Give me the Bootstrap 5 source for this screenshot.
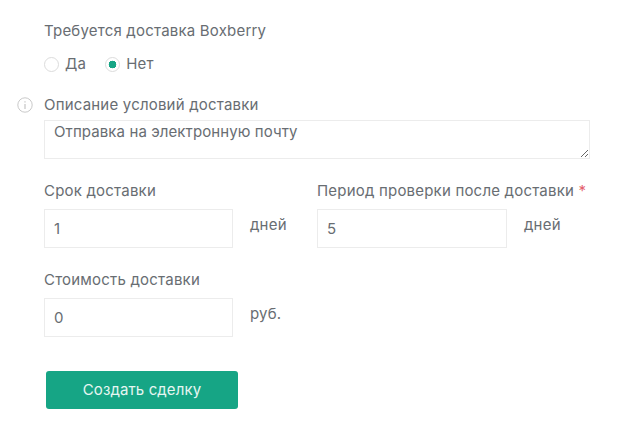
<!DOCTYPE html>
<html lang="ru">
<head>
<meta charset="utf-8">
<title>Доставка</title>
<link rel="stylesheet" href="https://cdn.jsdelivr.net/npm/bootstrap@5.3.0/dist/css/bootstrap.min.css">
<style>
body { background:#fff; font-family:Inter,"Noto Sans",sans-serif; font-size:15px; letter-spacing:.2px; color:#686d72; }
.sheet { padding:21px 38px 0 44px; position:relative; }
.cap { line-height:20px; margin:0; color:#686d72; }
.radios { margin-top:13px; height:20px; gap:19px; }
.radio-item { gap:6px; line-height:20px; }
.sheet .form-check-input { width:15px; height:15px; margin:0; border:1px solid #dcdcdc; background-color:#fff; background-image:none; box-shadow:none; position:relative; }
.sheet .form-check-input:checked { background-color:#fff; border-color:#dcdcdc; background-image:radial-gradient(circle,#16a585 0,#16a585 3.6px,transparent 4.1px); }
.desc-block { margin-top:21px; position:relative; }
.info-mark { position:absolute; left:-27px; top:2px; }
.sheet textarea.form-control { display:block; width:546px; height:39px; min-height:0; margin-top:5px; padding:0 9px; border:1px solid #ececec; border-radius:0; font-size:15px; letter-spacing:.1px; line-height:22px; color:#686d72; box-shadow:none; }
.duo { margin-top:22px; gap:30px; }
.field-col { width:243px; }
.field-col.wide { width:273px; }
.field-row { margin-top:8px; gap:17px; }
.sheet input.form-control { width:189px; height:39px; padding:0 9px; border:1px solid #ececec; border-radius:0; font-size:15px; color:#686d72; box-shadow:none; }
.sheet .wide input.form-control { width:190px; }
.unit { line-height:20px; padding-top:6px; }
.star { color:#e4606d; }
.cost { margin-top:22px; }
.sheet .go-btn { margin:34px 0 0 2px; width:192px; height:38px; background:#16a585; border:0; border-radius:3px; color:#e6f6f2; font-size:15px; letter-spacing:.1px; padding:0; }
</style>
</head>
<body>
<form class="sheet">
  <p class="cap">Требуется доставка Boxberry</p>
  <div class="d-flex align-items-center radios">
    <label class="d-flex align-items-center radio-item"><input class="form-check-input" type="radio" name="bx">Да</label>
    <label class="d-flex align-items-center radio-item"><input class="form-check-input" type="radio" name="bx" checked>Нет</label>
  </div>
  <div class="desc-block">
    <svg class="info-mark" width="16" height="16" viewBox="0 0 16 16" fill="none" stroke="#c9c9c9"><circle cx="8" cy="8" r="7.2"/><path d="M8 7v5" stroke-width="1.3"/><path d="M8 4.2v1.4" stroke-width="1.3"/></svg>
    <label class="cap d-block">Описание условий доставки</label>
    <textarea class="form-control">Отправка на электронную почту</textarea>
  </div>
  <div class="d-flex duo">
    <div class="field-col">
      <label class="cap d-block">Срок доставки</label>
      <div class="d-flex field-row"><input class="form-control" value="1"><span class="unit">дней</span></div>
    </div>
    <div class="field-col wide">
      <label class="cap d-block">Период проверки после доставки <span class="star">*</span></label>
      <div class="d-flex field-row"><input class="form-control" value="5"><span class="unit">дней</span></div>
    </div>
  </div>
  <div class="cost">
    <label class="cap d-block">Стоимость доставки</label>
    <div class="d-flex field-row"><input class="form-control" value="0"><span class="unit">руб.</span></div>
  </div>
  <button type="button" class="btn go-btn d-block">Создать сделку</button>
</form>
<script src="https://cdn.jsdelivr.net/npm/bootstrap@5.3.0/dist/js/bootstrap.bundle.min.js"></script>
</body>
</html>
